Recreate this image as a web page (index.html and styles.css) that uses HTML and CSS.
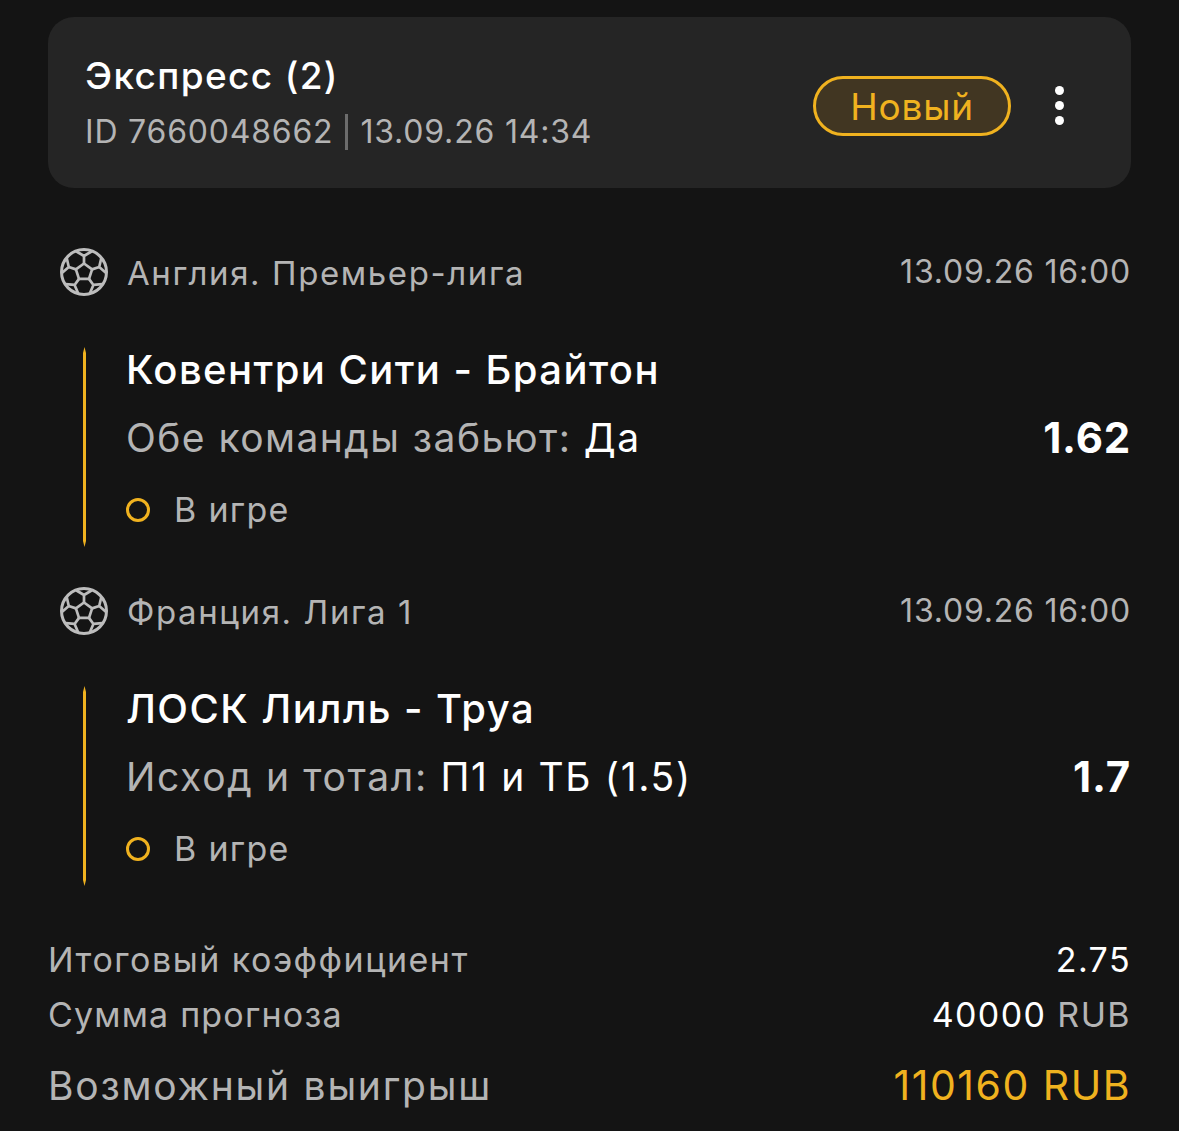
FILE: index.html
```html
<!DOCTYPE html>
<html lang="en">

<head>
    <meta charset="UTF-8">
    <meta name="viewport" content="width=device-width, initial-scale=1.0">
    <title>Экспресс</title>
    <link rel="stylesheet" href="styles.css">
</head>

<body>
    <svg class="sprite" width="0" height="0">
        <symbol id="ball" viewBox="0 0 48 48">
            <circle cx="24" cy="24" r="22.5" fill="none" stroke="currentColor" stroke-width="3" />
            <g fill="none" stroke="currentColor" stroke-width="2.700" stroke-linejoin="round" stroke-linecap="round">
                <path d="M24 15.500l8.100 5.900-3.100 9.500H19l-3.100-9.500z" />
                <path d="M24 15.500V8l-7.500-4.500M24 8l7.500-4.500" />
                <path transform="rotate(72 24 24)" d="M24 15.500V8l-7.500-4.500M24 8l7.500-4.500" />
                <path transform="rotate(144 24 24)" d="M24 15.500V8l-7.500-4.500M24 8l7.500-4.500" />
                <path transform="rotate(216 24 24)" d="M24 15.500V8l-7.500-4.500M24 8l7.500-4.500" />
                <path transform="rotate(288 24 24)" d="M24 15.500V8l-7.500-4.500M24 8l7.500-4.500" />
            </g>
        </symbol>
    </svg>

    <header class="card">
        <div class="card-info">
            <div class="card-title">Экспресс (2)</div>
            <div class="card-meta">
                <span>ID 7660048662</span>
                <span class="divider"></span>
                <span>13.09.26 14:34</span>
            </div>
        </div>
        <div class="badge">Новый</div>
        <div class="more">
            <span class="dot"></span>
            <span class="dot"></span>
            <span class="dot"></span>
        </div>
    </header>

    <section class="event event-first">
        <div class="league">
            <svg class="ball"><use href="#ball" /></svg>
            <span class="league-name">Англия. Премьер-лига</span>
            <span class="league-date">13.09.26 16:00</span>
        </div>
        <div class="match">
            <div class="bar"></div>
            <div class="match-body">
                <div class="match-title">Ковентри Сити - Брайтон</div>
                <div class="market">
                    <span class="market-name">Обе команды забьют: <span class="pick">Да</span></span>
                    <span class="odds">1.62</span>
                </div>
                <div class="status"><span class="ring"></span>В игре</div>
            </div>
        </div>
    </section>

    <section class="event">
        <div class="league">
            <svg class="ball"><use href="#ball" /></svg>
            <span class="league-name">Франция. Лига 1</span>
            <span class="league-date">13.09.26 16:00</span>
        </div>
        <div class="match">
            <div class="bar"></div>
            <div class="match-body">
                <div class="match-title">ЛОСК Лилль - Труа</div>
                <div class="market">
                    <span class="market-name market-name-wide">Исход и тотал: <span class="pick">П1 и ТБ (1.5)</span></span>
                    <span class="odds">1.7</span>
                </div>
                <div class="status"><span class="ring"></span>В игре</div>
            </div>
        </div>
    </section>

    <footer class="totals">
        <div class="total-row">
            <span class="coef-label">Итоговый коэффициент</span>
            <span class="value">2.75</span>
        </div>
        <div class="total-row">
            <span class="sum-label">Сумма прогноза</span>
            <span><span class="value">40000</span> RUB</span>
        </div>
        <div class="total-row total-win">
            <span>Возможный выигрыш</span>
            <span class="win">110160 RUB</span>
        </div>
    </footer>
</body>

</html>
```

FILE: styles.css
```css
* {
    box-sizing: border-box;
}

html, body {
    height: 100%;
}

body {
    margin: 0;
    padding: 17px 48px 0;
    overflow: hidden;
    background-color: #141414;
    color: #b4b4b4;
    font-family: Inter, "Liberation Sans", sans-serif;
    letter-spacing: 0.8px;
}

.sprite {
    display: block;
}

.card {
    display: flex;
    align-items: center;
    height: 171px;
    padding: 0 67px 0 37px;
    background-color: #252525;
    border-radius: 26px;
}

.card-info {
    flex: 1;
}

.card-title {
    font-size: 37px;
    line-height: 44px;
    font-weight: 500;
    color: #fff;
    letter-spacing: 1.36px;
}

.card-meta {
    display: flex;
    align-items: center;
    margin-top: 15px;
    font-size: 32px;
    line-height: 38px;
}

.divider {
    width: 3px;
    height: 36px;
    margin: 0 12px;
    background-color: #6c6c6c;
}

.badge {
    width: 198px;
    height: 60px;
    margin-top: 6px;
    margin-right: 44px;
    border: 3px solid #f0b21f;
    border-radius: 30px;
    background-color: #413622;
    color: #f0b21f;
    font-size: 37px;
    line-height: 56px;
    text-align: center;
}

.more {
    display: flex;
    flex-direction: column;
    gap: 6px;
    margin-top: 6px;
}

.dot {
    width: 9px;
    height: 9px;
    border-radius: 50%;
    background-color: #fff;
}

.event {
    margin-top: 36px;
}

.event-first {
    margin-top: 56px;
}

.league {
    display: flex;
    align-items: center;
    height: 58px;
    padding-left: 12px;
}

.ball {
    width: 48px;
    height: 48px;
    margin-right: 19px;
    margin-bottom: 2px;
    color: #bdbdbd;
}

.league-name {
    flex: 1;
    font-size: 33px;
    letter-spacing: 1.6px;
}

.league-date {
    margin-bottom: 3px;
    font-size: 32px;
}

.match {
    display: flex;
    height: 200px;
    margin-top: 45px;
    padding-left: 35px;
}

.bar {
    width: 3px;
    background-color: #f0b21f;
    clip-path: polygon(50% 0, 100% 6px, 100% calc(100% - 6px), 50% 100%, 0 calc(100% - 6px), 0 6px);
}

.match-body {
    flex: 1;
    padding-left: 40px;
}

.match-title {
    margin-top: 2px;
    font-size: 40px;
    line-height: 42px;
    font-weight: 500;
    color: #fff;
    letter-spacing: 1.43px;
}

.market {
    display: flex;
    justify-content: space-between;
    margin-top: 24px;
    font-size: 39px;
    line-height: 46px;
    letter-spacing: 1.45px;
}

.market-name-wide {
    letter-spacing: 1.65px;
}

.pick {
    color: #fff;
}

.odds {
    font-size: 42px;
    font-weight: 700;
    color: #fff;
    letter-spacing: 0.8px;
}

.status {
    display: flex;
    align-items: center;
    margin-top: 29px;
    font-size: 34px;
    line-height: 40px;
    letter-spacing: 1.3px;
}

.ring {
    width: 24px;
    height: 24px;
    margin-right: 24px;
    border: 3px solid #f0b21f;
    border-radius: 50%;
}

.totals {
    margin-top: 46px;
}

.total-row {
    display: flex;
    justify-content: space-between;
    align-items: center;
    height: 55px;
    font-size: 34px;
    letter-spacing: 1.4px;
}

.coef-label {
    letter-spacing: 1.5px;
}

.sum-label {
    letter-spacing: 1.2px;
}

.value {
    color: #fff;
}

.total-win {
    height: 70px;
    margin-top: 8px;
    font-size: 39px;
    letter-spacing: 1.75px;
}

.win {
    color: #f0b21f;
    font-size: 41px;
    letter-spacing: 1.5px;
}
```
